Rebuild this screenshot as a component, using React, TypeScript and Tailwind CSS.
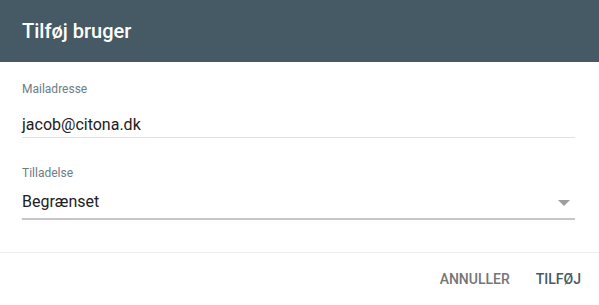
export default function App() {
  return (
    <div className="w-[599px] h-[305px] bg-white font-['Roboto',_'Liberation_Sans',_sans-serif] overflow-hidden">
      <div className="h-[62px] bg-[#455a64] flex items-center px-[22px]">
        <h1 className="text-[20px] font-medium text-white leading-none">Tilføj bruger</h1>
      </div>

      <div className="pl-[22px] pr-[24px] pt-[19px]">
        <label className="block text-[12px] leading-[16px] text-[#6b7d87]">Mailadresse</label>
        <div className="mt-[16px] border-b border-[#e0e0e0] text-[16px] leading-[24px] text-[#212121]">
          jacob@citona.dk
        </div>

        <label className="block mt-[27px] text-[12px] leading-[16px] text-[#6b7d87]">Tilladelse</label>
        <div className="mt-[9px] flex items-center justify-between border-b-2 border-[#c6c6c6] pb-[4px] text-[16px] leading-[24px] text-[#212121]">
          <span>Begrænset</span>
          <svg width="12" height="6" viewBox="0 0 12 6" className="mr-[5px] mt-[2px]">
            <path d="M0 0 L12 0 L6 6 Z" fill="#9e9e9e" />
          </svg>
        </div>
      </div>

      <div className="mt-[32px] border-t border-[#eeeeee] flex justify-end items-center gap-[26px] pt-[16px] pr-[18px]">
        <button className="text-[14px] leading-[20px] font-medium text-[#757575]">ANNULLER</button>
        <button className="text-[14px] leading-[20px] font-medium text-[#455a64]">TILFØJ</button>
      </div>
    </div>
  );
}
